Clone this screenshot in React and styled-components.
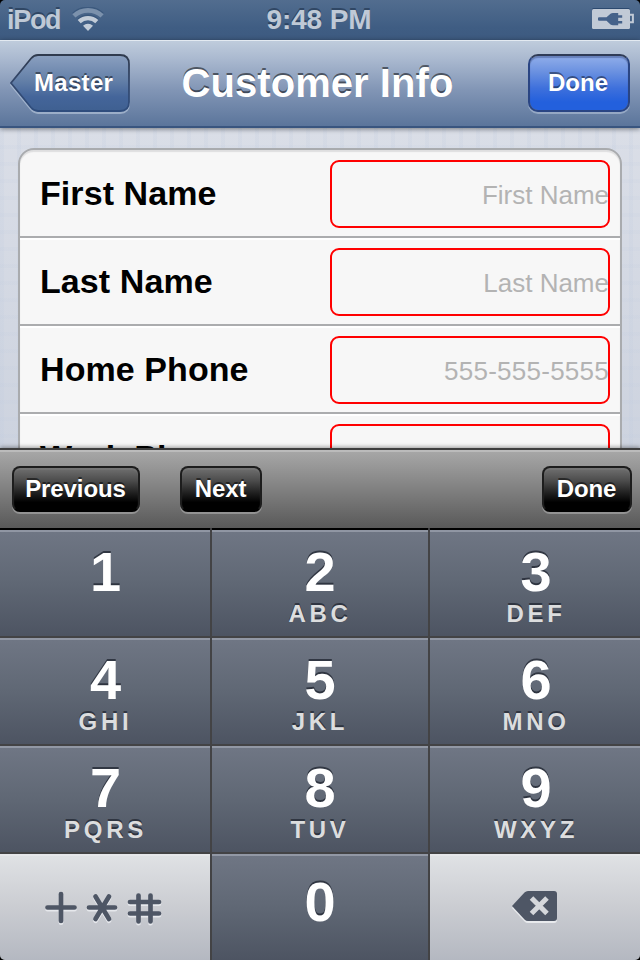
import React from "react";
import styled, { createGlobalStyle, css } from "styled-components";

const GlobalStyle = createGlobalStyle`
  * { box-sizing: border-box; }
  html { background: #000; }
  body { margin: 0; background: #000; font-family: "Liberation Sans", Arial, sans-serif; }
  button { font-family: inherit; margin: 0; padding: 0; border: 0; }
  svg { display: block; }
`;

const Screen = styled.div`
  width: 640px;
  height: 960px;
  display: flex;
  flex-direction: column;
  overflow: hidden;
  border-radius: 5px;
`;

const StatusBar = styled.header`
  height: 40px;
  flex: none;
  display: grid;
  grid-template-columns: 1fr auto 1fr;
  align-items: center;
  padding: 0 6px 0 7px;
  background: linear-gradient(#526d8f, #3f5d83 70%, #3d5a80);
  color: #bfc9d6;
  font-size: 28px;
  line-height: 38px;
  font-weight: bold;
  text-shadow: 0 -2px 0 rgba(20, 38, 62, 0.5);
`;

const Carrier = styled.div`
  display: grid;
  grid-template-columns: 52px 32px;
  align-items: center;
  gap: 13px;
  font-size: 27px;
  line-height: 36px;
  letter-spacing: -1.3px;
`;

const Clock = styled.time`
  padding-right: 3px;
  letter-spacing: -0.1px;
`;

const BatterySlot = styled.div`
  justify-self: end;
`;

const NavBar = styled.nav`
  height: 88px;
  flex: none;
  display: grid;
  grid-template-columns: 172px 1fr 167px;
  align-items: start;
  padding: 13px 10px 0 0;
  border-top: 1px solid #e3eaf1;
  border-bottom: 2px solid #39557f;
  background: linear-gradient(#bfccdc, #a9b8cf 22%, #8195b5 58%, #5b759b);
  position: relative;
  z-index: 1;
  box-shadow: 0 1px 5px rgba(0, 0, 0, 0.45);
`;

const NavTitle = styled.h1`
  margin: 0;
  padding-top: 6px;
  text-align: center;
  white-space: nowrap;
  font-size: 40px;
  line-height: 46px;
  letter-spacing: 0.05px;
  color: #fff;
  text-shadow: 0 -2px 0 rgba(0, 0, 0, 0.5);
`;

const BackButton = styled.button`
  width: 122px;
  height: 60px;
  margin-left: 9px;
  padding-left: 8px;
  display: grid;
  background: none;
  color: #fff;
  font-size: 24px;
  font-weight: bold;
  text-shadow: 0 -2px 0 rgba(0, 0, 0, 0.45);

  > * { grid-area: 1 / 1; }
  > svg { margin: -1px 0 0 -8px; }
  > span { line-height: 58px; text-align: left; padding-left: 17px; letter-spacing: 0.3px; }
`;

const DoneButton = styled.button`
  justify-self: end;
  width: 102px;
  height: 58px;
  padding-right: 2px;
  border: 2px solid #2a4583;
  border-top-color: #303c57;
  border-radius: 10px;
  background: linear-gradient(#91aeea, #6990e0 30%, #3e70dc 60%, #2360dd 85%) padding-box;
  color: #fff;
  font-size: 24px;
  line-height: 54px;
  font-weight: bold;
  text-shadow: 0 -2px 0 rgba(0, 0, 0, 0.42);
  box-shadow: inset 0 2px 1px rgba(30, 45, 100, 0.35), 0 2px 0 rgba(185, 200, 222, 0.55);
`;

const Content = styled.main`
  height: 320px;
  flex: none;
  overflow: hidden;
  padding: 20px 18px 0;
  background:
    repeating-linear-gradient(90deg, rgba(190, 202, 222, 0.18) 0 4px, transparent 4px 17px),
    repeating-linear-gradient(rgba(190, 202, 222, 0.12) 0 4px, transparent 4px 17px),
    linear-gradient(#dadee7, #cdd3df);
`;

const Group = styled.section`
  border: 2px solid #a9abae;
  border-radius: 16px 16px 0 0;
  background: #f7f7f7;
  box-shadow: inset 0 2px 1px #dededf;
`;

const FormRow = styled.label`
  height: 88px;
  display: flex;
  align-items: center;
  justify-content: space-between;
  padding: 0 10px 0 20px;
  border-bottom: 2px solid #abacae;

  & + & { box-shadow: inset 0 2px 0 #fff; }
`;

const RowLabel = styled.span`
  font-size: 34px;
  line-height: 40px;
  font-weight: bold;
  letter-spacing: 0.08px;
  color: #000;
`;

const Field = styled.span`
  width: 280px;
  height: 68px;
  margin-top: 2px;
  border: 2px solid #ff0000;
  border-radius: 9px;
  color: #b3b3b3;
  font-size: 26px;
  line-height: 66px;
  text-align: right;
  letter-spacing: ${(p) => (p.$numeric ? 0.25 : 0)}px;

  > span { margin-right: -1px; }
`;

const Accessory = styled.div`
  height: 80px;
  flex: none;
  display: flex;
  align-items: center;
  gap: 40px;
  padding: 0 8px 0 12px;
  border-top: 2px solid #3f3f3f;
  background: linear-gradient(#bbb 0 2px, #a6a6a6 2px, #595959);
  position: relative;
  z-index: 1;
  box-shadow: 0 -1px 4px rgba(0, 0, 0, 0.38);
`;

const BlackButton = styled.button`
  width: ${(p) => p.$width}px;
  height: 46px;
  padding-right: 1px;
  border: 2px solid #1d1d1d;
  border-bottom-color: #000;
  border-radius: 8px;
  background: linear-gradient(#707070, #4c4c4c 30%, #222 58%, #000 82%);
  color: #fff;
  font-size: 24px;
  line-height: 42px;
  font-weight: bold;
  letter-spacing: -0.1px;
  text-shadow: 0 -2px 0 rgba(0, 0, 0, 0.5);
  box-shadow: inset 0 2px 1px rgba(130, 130, 130, 0.35), 0 2px 0 rgba(165, 165, 165, 0.7);
  ${(p) => p.$end && css`margin-left: auto;`}
`;

const Keypad = styled.div`
  height: 432px;
  flex: none;
  display: grid;
  grid-template-columns: 210px 216px 210px;
  grid-template-rows: repeat(4, 106px);
  gap: 2px;
  padding-top: 2px;
  background:
    linear-gradient(90deg, #000 210px, #434345 210px 212px, #000 212px 428px, #434345 428px 430px, #000 430px)
      top / 100% 2px no-repeat,
    #434345;
`;

const Key = styled.button`
  display: flex;
  flex-direction: column;
  align-items: center;
  border-top: 2px solid ${(p) => (p.$light ? "#e6e7ea" : "#9298a5")};
  background: ${(p) =>
    p.$light
      ? "linear-gradient(#dfe1e4, #cbcdd2 48%, #b4b8c1)"
      : "linear-gradient(#6f7684, #606875 48%, #4d5462)"};
  ${(p) => p.$light && css`justify-content: center;`}

  &:nth-child(3n + 1) { padding-left: 1px; }
  &:nth-child(3n) { padding-left: 2px; }
`;

const Digit = styled.span`
  height: 60px;
  margin-top: ${(p) => (p.$alone ? 16 : 10)}px;
  font-size: 56px;
  line-height: 60px;
  font-weight: bold;
  color: #fff;
  text-shadow: 0 -2px 0 rgba(20, 25, 35, 0.65);
`;

const Letters = styled.span`
  height: 28px;
  margin-top: -2px;
  font-size: 24px;
  line-height: 28px;
  font-weight: bold;
  letter-spacing: 3.7px;
  color: #dcddde;
  text-shadow: 0 -2px 0 rgba(20, 25, 35, 0.6);
`;

function WifiIcon() {
  return (
    <svg width="32" height="26" viewBox="0 0 32 26" fill="none">
      <g stroke="#29466c" strokeOpacity=".45" transform="translate(0 -1.500)">
        <path d="M1.900 8.900A20.700 20.700 0 0 1 30.100 8.900" strokeWidth="4.600" />
        <path d="M7.200 14.600A12.900 12.900 0 0 1 24.800 14.600" strokeWidth="4.400" />
      </g>
      <path d="M1.900 8.900A20.700 20.700 0 0 1 30.100 8.900" stroke="#7b91ac" strokeWidth="4.600" />
      <path d="M7.200 14.600A12.900 12.900 0 0 1 24.800 14.600" stroke="#c2ccd8" strokeWidth="4.400" />
      <path d="M11 18.700A7.300 7.300 0 0 1 21 18.700L16 24Z" fill="#c2ccd8" />
    </svg>
  );
}

function BatteryIcon() {
  return (
    <svg width="42" height="24" viewBox="0 0 42 24">
      <rect y="0" width="38" height="20" rx="1.500" fill="#2c496f" />
      <rect y="1" width="38" height="20" rx="1.500" fill="#c1cad6" />
      <path d="M38 6.800h2.900v7.400H38" fill="none" stroke="#c1cad6" strokeWidth="2" />
      <path
        d="M7 9.200H14.500L18.500 5.800Q19.500 5 21 5H26.200V7.300H30.200V9.800H26.200V13H30.200V15.500H26.200V17.200H21Q19.500 17.200 18.500 16.400L14.500 12.800H7Q6 12.800 6 11.800V10.200Q6 9.200 7 9.200Z"
        fill="#45628a"
      />
    </svg>
  );
}

function BackShape() {
  return (
    <svg width="122" height="61" viewBox="0 0 122 61">
      <defs>
        <linearGradient id="backFill" x1="0" y1="0" x2="0" y2="1">
          <stop offset="0" stopColor="#8ba0c0" />
          <stop offset=".45" stopColor="#6480a8" />
          <stop offset=".75" stopColor="#44659a" />
          <stop offset="1" stopColor="#3f6091" />
        </linearGradient>
        <linearGradient id="backLine" x1="0" y1="0" x2="0" y2="1">
          <stop offset="0" stopColor="#303b4e" />
          <stop offset=".5" stopColor="#34496e" />
          <stop offset="1" stopColor="#2f4d7d" />
        </linearGradient>
      </defs>
      <path
        d="M29 2H111Q120 2 120 11V49Q120 58 111 58H29Q25 58 22 54.500L2 30 22 5.500Q25 2 29 2Z"
        transform="translate(0 2)"
        fill="none"
        stroke="#aebed4"
        strokeOpacity=".75"
        strokeWidth="1.800"
      />
      <path
        d="M29 2H111Q120 2 120 11V49Q120 58 111 58H29Q25 58 22 54.500L2 30 22 5.500Q25 2 29 2Z"
        fill="url(#backFill)"
        stroke="url(#backLine)"
        strokeWidth="1.800"
      />
    </svg>
  );
}

function SymbolMarks() {
  return (
    <g>
      <path d="M18 4v27M4.500 17.500h27" />
      <path d="M46 17.500h26M52.500 6.500l13.500 22.500M66 6.500l-13.500 22.500" />
      <path d="M95.500 5.500v26M107.500 5.500v26M87 12h29M87 23.500h29" />
    </g>
  );
}

function SymbolsIcon() {
  return (
    <svg width="120" height="36" viewBox="0 0 120 36" fill="none" strokeWidth="4.700" strokeLinecap="round">
      <g stroke="#e6e8ec" transform="translate(0 1.700)"><SymbolMarks /></g>
      <g stroke="#4e5665"><SymbolMarks /></g>
    </svg>
  );
}

function DeleteIcon() {
  return (
    <svg width="46" height="34" viewBox="0 0 46 34" strokeLinecap="butt">
      <path d="M16 3H42Q45 3 45 6V30Q45 33 42 33H16Q14 33 12.500 31.500L0 18 12.500 4.500Q14 3 16 3Z" fill="#e8eaed" />
      <path d="M16 1H42Q45 1 45 4V28Q45 31 42 31H16Q14 31 12.500 29.500L0 16 12.500 2.500Q14 1 16 1Z" fill="#4e5665" />
      <path d="M19.500 8l15.500 15.500M35 8l-15.500 15.500" stroke="#d5d7db" strokeWidth="5" />
    </svg>
  );
}

const fields = [
  ["First Name", "First Name", false],
  ["Last Name", "Last Name", false],
  ["Home Phone", "555-555-5555", true],
  ["Work Phone", "555-555-5555", true],
];

const keys = [
  ["1", ""], ["2", "ABC"], ["3", "DEF"],
  ["4", "GHI"], ["5", "JKL"], ["6", "MNO"],
  ["7", "PQRS"], ["8", "TUV"], ["9", "WXYZ"],
];

const SymbolsOffset = styled.span`
  padding: 0 6px 0 0;
`;

const DeleteOffset = styled.span`
  padding: 0 2px 2px 0;
`;

export default function App() {
  return (
    <>
      <GlobalStyle />
      <Screen>
        <StatusBar>
          <Carrier><span>iPod</span><WifiIcon /></Carrier>
          <Clock>9:48 PM</Clock>
          <BatterySlot><BatteryIcon /></BatterySlot>
        </StatusBar>
        <NavBar>
          <BackButton><BackShape /><span>Master</span></BackButton>
          <NavTitle>Customer Info</NavTitle>
          <DoneButton>Done</DoneButton>
        </NavBar>
        <Content>
          <Group>
            {fields.map(([label, hint, numeric]) => (
              <FormRow key={label}>
                <RowLabel>{label}</RowLabel>
                <Field $numeric={numeric}><span>{hint}</span></Field>
              </FormRow>
            ))}
          </Group>
        </Content>
        <Accessory>
          <BlackButton $width={128}>Previous</BlackButton>
          <BlackButton $width={82}>Next</BlackButton>
          <BlackButton $width={90} $end>Done</BlackButton>
        </Accessory>
        <Keypad>
          {keys.map(([digit, letters]) => (
            <Key key={digit}>
              <Digit>{digit}</Digit>
              {letters && <Letters>{letters}</Letters>}
            </Key>
          ))}
          <Key $light aria-label="Symbols"><SymbolsOffset><SymbolsIcon /></SymbolsOffset></Key>
          <Key><Digit $alone>0</Digit></Key>
          <Key $light aria-label="Delete"><DeleteOffset><DeleteIcon /></DeleteOffset></Key>
        </Keypad>
      </Screen>
    </>
  );
}
